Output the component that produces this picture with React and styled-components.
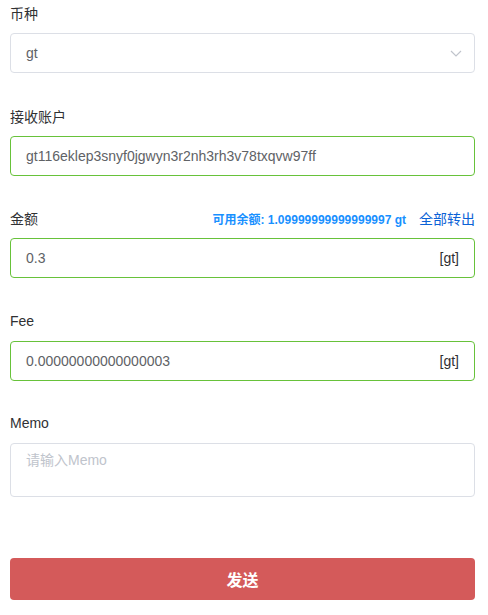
import React from 'react';
import styled, { createGlobalStyle } from 'styled-components';

const Global = createGlobalStyle`
  body {
    margin: 0;
    background: #fff;
    font-family: "Liberation Sans", Arial, "Noto Sans CJK SC", sans-serif;
  }
`;

const Form = styled.div`
  padding: 0 13px 0 10px;
`;

const Item = styled.div`
  margin-bottom: ${p => p.$last ? '61px' : '29.5px'};
`;

const LabelRow = styled.div`
  display: flex;
  align-items: center;
  justify-content: space-between;
  height: 26px;
  margin-bottom: 7px;
`;

const Label = styled.label`
  font-size: 14px;
  color: #303133;
`;

const Balance = styled.div`
  display: flex;
  align-items: center;
  gap: 13px;
`;

const BalanceText = styled.span`
  font-size: 12px;
  font-weight: bold;
  color: #1890ff;
`;

const AllOut = styled.a`
  font-size: 14px;
  color: #0b62d6;
  cursor: pointer;
`;

const Box = styled.div`
  display: flex;
  align-items: ${p => p.$area ? 'flex-start' : 'center'};
  box-sizing: border-box;
  height: ${p => p.$area ? '54px' : '40px'};
  padding: ${p => p.$area ? '5px 15px' : '0 15px'};
  border: 1px solid ${p => p.$ok ? '#67c23a' : '#dcdfe6'};
  border-radius: 4px;
  font-size: 14px;
  color: #606266;
`;

const Value = styled.span`
  flex: 1;
  color: ${p => p.$placeholder ? '#c0c4cc' : '#606266'};
`;

const Suffix = styled.span`
  color: #303133;
`;

const Arrow = styled.svg`
  width: 14px;
  height: 14px;
  margin-right: -4px;
`;

const Button = styled.button`
  display: block;
  width: 100%;
  height: 42px;
  border: none;
  border-radius: 4px;
  background: #d45a5a;
  color: #fff;
  font-size: 16px;
  font-weight: bold;
  font-family: inherit;
`;

const App = () => (
  <Form>
    <Global />
    <Item>
      <LabelRow><Label>币种</Label></LabelRow>
      <Box>
        <Value>gt</Value>
        <Arrow viewBox="0 0 14 14">
          <path d="M2 5l5 5 5-5" fill="none" stroke="#c0c4cc" strokeWidth="1.2" />
        </Arrow>
      </Box>
    </Item>
    <Item>
      <LabelRow><Label>接收账户</Label></LabelRow>
      <Box $ok><Value>gt116eklep3snyf0jgwyn3r2nh3rh3v78txqvw97ff</Value></Box>
    </Item>
    <Item>
      <LabelRow>
        <Label>金额</Label>
        <Balance>
          <BalanceText>可用余额: 1.09999999999999997 gt</BalanceText>
          <AllOut>全部转出</AllOut>
        </Balance>
      </LabelRow>
      <Box $ok>
        <Value>0.3</Value>
        <Suffix>[gt]</Suffix>
      </Box>
    </Item>
    <Item>
      <LabelRow><Label>Fee</Label></LabelRow>
      <Box $ok>
        <Value>0.00000000000000003</Value>
        <Suffix>[gt]</Suffix>
      </Box>
    </Item>
    <Item $last>
      <LabelRow><Label>Memo</Label></LabelRow>
      <Box $area><Value $placeholder>请输入Memo</Value></Box>
    </Item>
    <Button>发送</Button>
  </Form>
);

export default App;
